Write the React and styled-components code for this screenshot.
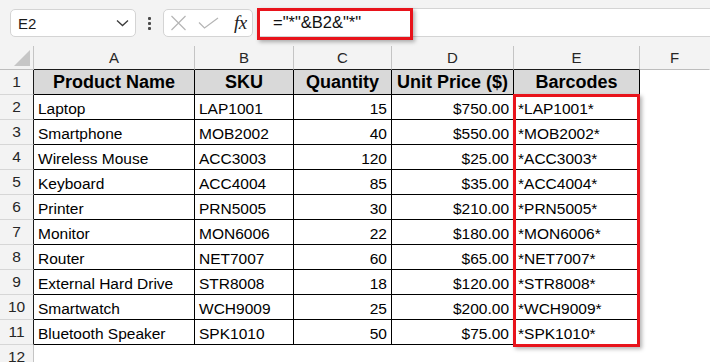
import React from 'react'
import styled, { createGlobalStyle } from 'styled-components'

const GlobalStyle = createGlobalStyle`
  html, body {
    margin: 0;
    padding: 0;
    background: #f3f3f3;
    overflow: hidden;
  }
  * {
    box-sizing: border-box;
  }
`

const StyledApp = styled.div`
  width: 710px;
  height: 362px;
  display: flex;
  flex-direction: column;
  background: #f3f3f3;
  font-family: "Liberation Sans", Arial, sans-serif;
  color: #000;
  overflow: hidden;
`

const StyledToolbar = styled.div`
  height: 46px;
  flex: none;
  display: flex;
  align-items: flex-start;
  padding: 9px 0 0 10px;
`

const StyledNameBox = styled.div`
  width: 126px;
  height: 28px;
  background: #fff;
  border: 1px solid #d4d4d4;
  border-radius: 5px;
  display: flex;
  align-items: center;
  justify-content: space-between;
  padding: 0 6px 0 7px;
  font-size: 15px;
  color: #1a1a1a;
`

const StyledDots = styled.div`
  width: 27px;
  height: 28px;
  display: flex;
  flex-direction: column;
  align-items: center;
  justify-content: center;
  gap: 2px;

  span {
    width: 3px;
    height: 3px;
    border-radius: 1px;
    background: #4a4a4a;
  }
`

const StyledFxBox = styled.div`
  width: 90px;
  height: 28px;
  background: #fff;
  border: 1px solid #d4d4d4;
  border-radius: 5px;
  display: flex;
  align-items: center;
  padding: 0 0 0 6px;
  gap: 11px;
`

const StyledFx = styled.span`
  font-family: "Liberation Serif", "Times New Roman", serif;
  font-style: italic;
  font-size: 19px;
  color: #222;
  margin-left: 4px;
  letter-spacing: -0.5px;
`

const StyledFormula = styled.div`
  position: relative;
  flex: 1;
  height: 29px;
  margin: -1px 0 0 4px;
  background: #fff;
  border-top: 1px solid #d4d4d4;
  border-bottom: 1px solid #d4d4d4;
  display: flex;
  align-items: center;
  padding-left: 16px;
  font-size: 16.5px;
  color: #111;
`

const StyledFormulaMark = styled.div`
  position: absolute;
  left: 0;
  top: -1px;
  width: 156px;
  height: 32px;
  border: 3px solid #e8131b;
  box-shadow: 2px 2px 4px rgba(0, 0, 0, 0.3);
  pointer-events: none;
`

const StyledSheet = styled.div`
  flex: 1;
  display: grid;
  grid-template-columns: 34px 161px 99px 98px 122px 126px 1fr;
  grid-template-rows: 24px repeat(11, 25px) 1fr;
  background: #fff;
`

const StyledCorner = styled.div`
  grid-row: 1;
  grid-column: 1;
  background: #f3f3f3;
  border-right: 1px solid #c4c4c4;
  border-bottom: 1px solid #bdbdbd;
  display: flex;
  align-items: flex-end;
  justify-content: flex-end;
  padding: 0 3px 3px 0;
`

const StyledColHead = styled.div`
  grid-row: 1;
  grid-column: ${p => p.$col};
  background: #f3f3f3;
  border-right: 1px solid ${p => p.$last ? 'transparent' : '#c4c4c4'};
  border-bottom: 1px solid ${p => p.$table ? '#1a1a1a' : '#bdbdbd'};
  text-align: center;
  font-size: 15px;
  line-height: 23px;
  color: #262626;
`

const StyledRowHead = styled.div`
  grid-row: ${p => p.$row};
  grid-column: 1;
  background: #f3f3f3;
  border-right: 1px solid ${p => p.$table ? '#1a1a1a' : '#c4c4c4'};
  border-bottom: 1px solid #d6d6d6;
  text-align: center;
  font-size: 15.5px;
  line-height: 24px;
  color: #262626;
`

const StyledCell = styled.div`
  grid-row: ${p => p.$row};
  grid-column: ${p => p.$col};
  border-right: 1px solid ${p => p.$table ? '#000' : 'transparent'};
  border-bottom: 1px solid ${p => p.$table ? '#000' : 'transparent'};
  background: ${p => p.$head ? '#d9d9d9' : '#fff'};
  font-size: ${p => p.$head ? '18px' : '15.5px'};
  font-weight: ${p => p.$head ? 700 : 400};
  text-align: ${p => p.$head ? 'center' : p.$right ? 'right' : 'left'};
  line-height: ${p => p.$head ? '24px' : '20px'};
  padding: ${p => p.$head ? '0' : '4px 4px 0 4px'};
  white-space: nowrap;
  overflow: hidden;
`

const StyledSelection = styled.div`
  grid-row: 3 / 13;
  grid-column: 6;
  margin: -1px 0 -2px -1px;
  border: 3px solid #e8131b;
  box-shadow: 2px 2px 4px rgba(0, 0, 0, 0.3);
  pointer-events: none;
  z-index: 2;
`

const products = [
  ['Laptop', 'LAP1001', 15, '$750.00'],
  ['Smartphone', 'MOB2002', 40, '$550.00'],
  ['Wireless Mouse', 'ACC3003', 120, '$25.00'],
  ['Keyboard', 'ACC4004', 85, '$35.00'],
  ['Printer', 'PRN5005', 30, '$210.00'],
  ['Monitor', 'MON6006', 22, '$180.00'],
  ['Router', 'NET7007', 60, '$65.00'],
  ['External Hard Drive', 'STR8008', 18, '$120.00'],
  ['Smartwatch', 'WCH9009', 25, '$200.00'],
  ['Bluetooth Speaker', 'SPK1010', 50, '$75.00'],
]

const headers = ['Product Name', 'SKU', 'Quantity', 'Unit Price ($)', 'Barcodes']
const letters = ['A', 'B', 'C', 'D', 'E', 'F']

const Chevron = () => (
  <svg width="13" height="8" viewBox="0 0 13 8">
    <path d="M1 1.5 L6.5 6.5 L12 1.5" fill="none" stroke="#3a3a3a" strokeWidth="1.3" />
  </svg>
)

const Cross = () => (
  <svg width="17" height="16" viewBox="0 0 17 16">
    <path d="M1.5 1 L15.5 15 M15.5 1 L1.5 15" fill="none" stroke="#b5b5b5" strokeWidth="1.2" />
  </svg>
)

const Check = () => (
  <svg width="21" height="12" viewBox="0 0 21 12">
    <path d="M1 5.5 L6.5 11 L20 1" fill="none" stroke="#b5b5b5" strokeWidth="1.2" />
  </svg>
)

const Corner = () => (
  <svg width="16" height="16" viewBox="0 0 16 16">
    <path d="M16 0 L16 16 L0 16 Z" fill="#c6c6c6" />
  </svg>
)

const App = () => {
  return (
    <StyledApp>
      <GlobalStyle />
      <StyledToolbar>
        <StyledNameBox>
          <span>E2</span>
          <Chevron />
        </StyledNameBox>
        <StyledDots>
          <span />
          <span />
          <span />
        </StyledDots>
        <StyledFxBox>
          <Cross />
          <Check />
          <StyledFx>fx</StyledFx>
        </StyledFxBox>
        <StyledFormula>
          <StyledFormulaMark />
          ="*"&amp;B2&amp;"*"
        </StyledFormula>
      </StyledToolbar>

      <StyledSheet>
        <StyledCorner>
          <Corner />
        </StyledCorner>
        {letters.map((l, i) => (
          <StyledColHead key={l} $col={i + 2} $table={i < 5} $last={i === 5}>
            {l}
          </StyledColHead>
        ))}

        <StyledRowHead $row={2} $table>1</StyledRowHead>
        {headers.map((h, i) => (
          <StyledCell key={h} $row={2} $col={i + 2} $table $head>{h}</StyledCell>
        ))}
        <StyledCell $row={2} $col={7} />

        {products.map((p, r) => {
          const row = r + 3
          return (
            <React.Fragment key={p[1]}>
              <StyledRowHead $row={row} $table>{r + 2}</StyledRowHead>
              <StyledCell $row={row} $col={2} $table>{p[0]}</StyledCell>
              <StyledCell $row={row} $col={3} $table>{p[1]}</StyledCell>
              <StyledCell $row={row} $col={4} $table $right>{p[2]}</StyledCell>
              <StyledCell $row={row} $col={5} $table $right>{p[3]}</StyledCell>
              <StyledCell $row={row} $col={6} $table>*{p[1]}*</StyledCell>
              <StyledCell $row={row} $col={7} />
            </React.Fragment>
          )
        })}

        <StyledRowHead $row={13}>12</StyledRowHead>
        <StyledSelection />
      </StyledSheet>
    </StyledApp>
  )
}

export default App
